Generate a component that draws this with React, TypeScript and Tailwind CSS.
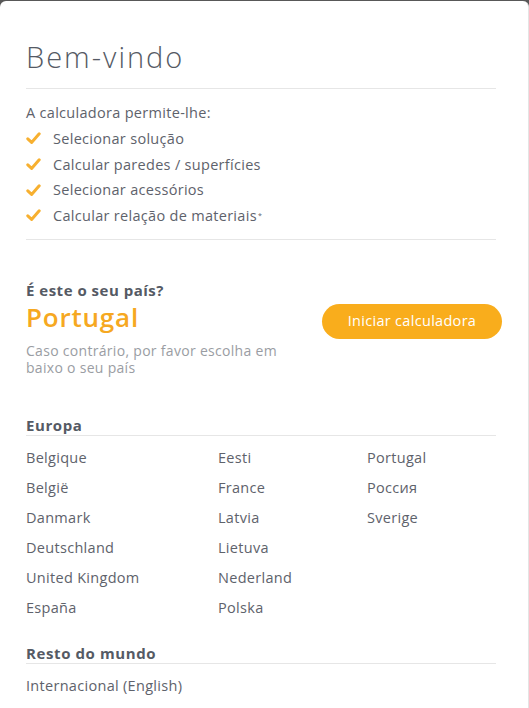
import React from 'react'

const features = ['Selecionar solução', 'Calcular paredes / superfícies', 'Selecionar acessórios', 'Calcular relação de materiais']

const europe = [
    ['Belgique', 'België', 'Danmark', 'Deutschland', 'United Kingdom', 'España'],
    ['Eesti', 'France', 'Latvia', 'Lietuva', 'Nederland', 'Polska'],
    ['Portugal', 'Россия', 'Sverige'],
]

const Check = () => (
    <svg width="15" height="13" viewBox="0 0 15 13" className="shrink-0">
        <polyline points="1.8,6.8 5.6,10.4 13.2,1.8" fill="none" stroke="#f7b030" strokeWidth="3" strokeLinecap="round" strokeLinejoin="round" />
    </svg>
)

export default function App() {
    return (
        <div className="min-h-screen bg-[#585858] pt-px" style={{ fontFamily: '"Open Sans", "Liberation Sans", sans-serif' }}>
            <div className="min-h-[707px] rounded-t-md border-r border-[#e4e4e4] bg-white px-[26px] pt-[36px] tracking-[0.3px] text-[#5e626b]">
                <h1 className="text-[29px] font-light leading-[40px] tracking-[2px] text-[#555a64]">Bem-vindo</h1>
                <div className="mr-[6px] mt-[11px] border-t border-[#e6e6e6]" />

                <p className="mt-[14px] text-[14.5px] leading-[20px]">A calculadora permite-lhe:</p>
                <ul className="mt-[3px] flex flex-col">
                    {features.map((f, i) => (
                        <li key={f} className="flex h-[25.7px] items-center gap-[12px] text-[14.5px]">
                            <Check />
                            <span>
                                {f}
                                {i === 3 && <sup className="ml-px text-[7px]">*</sup>}
                            </span>
                        </li>
                    ))}
                </ul>
                <div className="mr-[6px] mt-[10px] border-t border-[#e6e6e6]" />

                <div className="mt-[39px] flex items-start justify-between">
                    <div>
                        <p className="text-[15px] font-bold leading-[22px] tracking-[0.5px] text-[#555a64]">É este o seu país?</p>
                        <p className="text-[26px] font-semibold leading-[32px] tracking-[0.8px] text-[#f6a821]">Portugal</p>
                        <p className="mt-[9px] w-[270px] text-[14px] leading-[17px] text-[#9a9da3]">Caso contrário, por favor escolha em baixo o seu país</p>
                    </div>
                    <button className="ml-auto mt-[25px] h-[35px] w-[180px] rounded-full bg-[#f9ad1c] text-[14.5px] text-white">Iniciar calculadora</button>
                </div>

                <h2 className="mt-[39px] text-[15px] font-bold leading-[20px] tracking-[0.6px] text-[#555a64]">Europa</h2>
                <div className="mr-[6px] border-t border-[#e6e6e6]" />
                <div className="mt-[7px] grid grid-cols-[192px_149px_1fr] text-[14.5px]">
                    {europe.map((col, i) => (
                        <div key={i} className="flex flex-col">
                            {col.map(c => (
                                <span key={c} className="h-[30px] leading-[30px]">
                                    {c}
                                </span>
                            ))}
                        </div>
                    ))}
                </div>

                <h2 className="mt-[20px] text-[15px] font-bold leading-[20px] tracking-[0.6px] text-[#555a64]">Resto do mundo</h2>
                <div className="mr-[6px] border-t border-[#e6e6e6]" />
                <p className="mt-[7px] text-[14.5px] leading-[30px]">Internacional (English)</p>
            </div>
        </div>
    )
}
